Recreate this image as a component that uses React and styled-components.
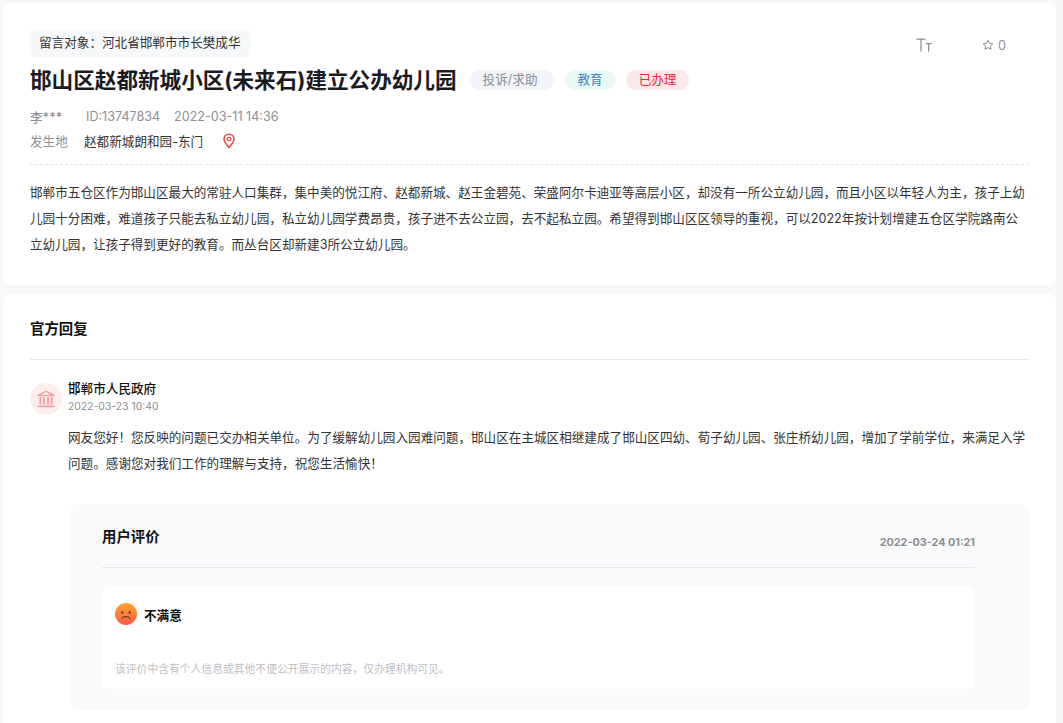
import React from "react";
import styled, { createGlobalStyle } from "styled-components";

const Global = createGlobalStyle`
  html, body { margin: 0; padding: 0; background: #f7f8fa; }
  body { font-family: Inter, "Noto Sans CJK SC", sans-serif; overflow: hidden; }
`;
const Page = styled.div`
  width: 1053px; height: 723px; margin-left: 3px; padding-top: 3px; box-sizing: border-box;
  display: flex; flex-direction: column; gap: 9px; overflow: hidden;
`;
const Card = styled.section`
  background: #fff; border-radius: 8px; padding: ${p => p.$pad}; box-sizing: border-box; flex: none;
  height: ${p => p.$h}px;
`;
const TopRow = styled.div`display: flex; justify-content: space-between; align-items: flex-start;`;
const Target = styled.div`
  background: #f7f8fa; border-radius: 3px; height: 27px; line-height: 26px; padding: 0 9px;
  font-size: 12.6px; color: #333; width: fit-content;
`;
const Tools = styled.div`display: flex; align-items: center; gap: 50px; padding: 7px 23px 0 0; color: #888;`;
const FontTool = styled.span`display: flex; width: 16px; height: 16px;`;
const Star = styled.span`display: flex; align-items: center; gap: 4px; font-size: 12.6px; color: #8a8f99;`;
const TitleRow = styled.div`display: flex; align-items: center; margin-top: 6px; height: 34px;`;
const Title = styled.h1`margin: 0 13px 0 0; font-size: 21.6px; line-height: 34px; font-weight: 700; color: #1b1b1f;`;
const Tag = styled.span`
  height: 20px; line-height: 20px; border-radius: 10px; padding: 0 ${p => p.$r}px 0 ${p => p.$l}px; margin: -1px 11px 0 0;
  font-size: 12.6px; background: ${p => p.$bg}; color: ${p => p.$fg};
`;
const Meta = styled.div`
  display: flex; align-items: center; margin-top: ${p => p.$top}px; height: 20px; font-size: 12.6px; color: #8e8e93;
`;
const Author = styled.span`width: 56px; font-weight: 500;`;
const Id = styled.span`width: 88px;`;
const PlaceLabel = styled.span`width: 54px;`;
const Place = styled.span`color: #333; margin-right: 19px;`;
const PinSlot = styled.span`display: flex; margin-top: 1px;`;
const Dashed = styled.hr`border: 0; border-top: 1px dashed #e4e6ea; margin: 14px 0 0;`;
const Body = styled.p`margin: 15px 0 0; font-size: 12.6px; line-height: 26px; color: #333;`;
const SectionTitle = styled.h2`margin: 0; font-size: 14.4px; line-height: 20px; font-weight: 700; color: #111;`;
const Solid = styled.hr`border: 0; border-top: 1px solid ${p => p.$c}; margin: ${p => p.$m};`;
const ReplyHead = styled.div`display: flex; gap: 6px; align-items: center;`;
const Badge = styled.span`
  width: 32px; height: 32px; border-radius: 50%; background: #fdeeee; display: flex; align-items: center; justify-content: center;
`;
const ReplyMeta = styled.div`display: flex; flex-direction: column; margin-top: -1px;`;
const Org = styled.span`font-size: 12.6px; line-height: 17px; font-weight: 500; color: #111;`;
const Time = styled.span`font-size: 10.4px; line-height: 20px; color: #8e8e93;`;
const Reply = styled.p`margin: 8px 0 0 38px; font-size: 12.6px; line-height: 26px; color: #333;`;
const Review = styled.div`
  margin: 27px 0 0 41px; height: 206px; background: #f9fafb; border-radius: 8px; padding: 23px 54px 0 31px; box-sizing: border-box;
`;
const ReviewHead = styled.div`display: flex; justify-content: space-between; align-items: flex-start;`;
const ReviewDate = styled.span`font-size: 10.8px; font-weight: 700; color: #8e8e93; line-height: 16px; margin-top: 8px;`;
const Inner = styled.div`
  background: #fff; border-radius: 8px; height: 103px; padding: 17px 13px 0; box-sizing: border-box;
`;
const Mood = styled.div`display: flex; align-items: center; gap: 7px; font-size: 12.6px; font-weight: 700; color: #111;`;
const Note = styled.div`margin-top: 36px; font-size: 10.8px; line-height: 18px; color: #c0c0c4;`;

const Pin = () => (
  <svg width="14" height="16" viewBox="0 0 14 16" fill="none">
    <path d="M7 1.200C4 1.200 2 3.400 2 6c0 3.200 3.400 6.800 5 8.600 1.600-1.800 5-5.400 5-8.600 0-2.600-2-4.800-5-4.800z" stroke="#ee4b4b" strokeWidth="1.500" />
    <circle cx="7" cy="6" r="1.700" stroke="#ee4b4b" strokeWidth="1.300" />
  </svg>
);
const FontIcon = () => (
  <svg width="16" height="16" viewBox="0 0 16 16" fill="none" stroke="#8a8a90" strokeWidth="1.200">
    <path d="M0.500 2.200h9M5 2.200V14.500M9.800 6.600h5.700M12.600 6.600V14.500" />
  </svg>
);
const StarIcon = () => (
  <svg width="12" height="12" viewBox="0 0 24 24" fill="none" stroke="#8a8f99" strokeWidth="2">
    <path d="M12 2.500l2.900 6.300 6.900.8-5.100 4.600 1.400 6.800L12 17.100 5.900 20.500l1.400-6.800L2.200 9.600l6.900-.8z" />
  </svg>
);
const Bank = () => (
  <svg width="20" height="20" viewBox="0 0 20 20" fill="#f0a09e">
    <path d="M10 1.500L1.500 5.800v1.400h17V5.800zM10 3.100l5.300 2.700H4.700z" />
    <rect x="3.400" y="8.200" width="2" height="7.300" />
    <rect x="7" y="8.200" width="2" height="7.300" />
    <rect x="11" y="8.200" width="2" height="7.300" />
    <rect x="14.600" y="8.200" width="2" height="7.300" />
    <rect x="1.500" y="16.500" width="17" height="1.700" />
  </svg>
);
const Sad = () => (
  <svg width="22" height="22" viewBox="0 0 22 22">
    <defs>
      <linearGradient id="sadFace" x1="0" y1="0" x2="0" y2="1">
        <stop offset="0" stopColor="#fda629" />
        <stop offset="1" stopColor="#ff5a4b" />
      </linearGradient>
    </defs>
    <circle cx="11" cy="11" r="11" fill="url(#sadFace)" />
    <circle cx="7.300" cy="9.500" r="1.200" fill="#6b3a22" />
    <circle cx="14.700" cy="9.500" r="1.200" fill="#6b3a22" />
    <path d="M7 15.500c1.300-2.400 6.700-2.400 8 0" fill="none" stroke="#6b3a22" strokeWidth="1.200" strokeLinecap="round" />
  </svg>
);

export default function App() {
  return (
    <>
      <Global />
      <Page>
        <Card $h={282} $pad="27px 27px 0">
          <TopRow>
            <Target>留言对象：河北省邯郸市市长樊成华</Target>
            <Tools>
              <FontTool><FontIcon /></FontTool>
              <Star><StarIcon />0</Star>
            </Tools>
          </TopRow>
          <TitleRow>
            <Title>邯山区赵都新城小区(未来石)建立公办幼儿园</Title>
            <Tag $l={13} $r={17} $bg="#f1f4f9" $fg="#8a8f99">投诉/求助</Tag>
            <Tag $l={12} $r={12} $bg="#e9fbf8" $fg="#4a7fc4">教育</Tag>
            <Tag $l={13} $r={13} $bg="#fbe9e9" $fg="#e0283c">已办理</Tag>
          </TitleRow>
          <Meta $top={9}>
            <Author>李***</Author>
            <Id>ID:13747834</Id>
            <span>2022-03-11 14:36</span>
          </Meta>
          <Meta $top={4}>
            <PlaceLabel>发生地</PlaceLabel>
            <Place>赵都新城朗和园-东门</Place>
            <PinSlot><Pin /></PinSlot>
          </Meta>
          <Dashed />
          <Body>邯郸市五仓区作为邯山区最大的常驻人口集群，集中美的悦江府、赵都新城、赵王金碧苑、荣盛阿尔卡迪亚等高层小区，却没有一所公立幼儿园，而且小区以年轻人为主，孩子上幼儿园十分困难，难道孩子只能去私立幼儿园，私立幼儿园学费昂贵，孩子进不去公立园，去不起私立园。希望得到邯山区区领导的重视，可以2022年按计划增建五仓区学院路南公立幼儿园，让孩子得到更好的教育。而丛台区却新建3所公立幼儿园。</Body>
        </Card>
        <Card $h={440} $pad="25px 27px 0">
          <SectionTitle>官方回复</SectionTitle>
          <Solid $c="#e6e6e8" $m="20px 0 21px" />
          <ReplyHead>
            <Badge><Bank /></Badge>
            <ReplyMeta>
              <Org>邯郸市人民政府</Org>
              <Time>2022-03-23 10:40</Time>
            </ReplyMeta>
          </ReplyHead>
          <Reply>网友您好！您反映的问题已交办相关单位。为了缓解幼儿园入园难问题，邯山区在主城区相继建成了邯山区四幼、荀子幼儿园、张庄桥幼儿园，增加了学前学位，来满足入学问题。感谢您对我们工作的理解与支持，祝您生活愉快！</Reply>
          <Review>
            <ReviewHead>
              <SectionTitle>用户评价</SectionTitle>
              <ReviewDate>2022-03-24 01:21</ReviewDate>
            </ReviewHead>
            <Solid $c="#e6e8ee" $m="16px 0 18px" />
            <Inner>
              <Mood><Sad />不满意</Mood>
              <Note>该评价中含有个人信息或其他不便公开展示的内容，仅办理机构可见。</Note>
            </Inner>
          </Review>
        </Card>
      </Page>
    </>
  );
}
